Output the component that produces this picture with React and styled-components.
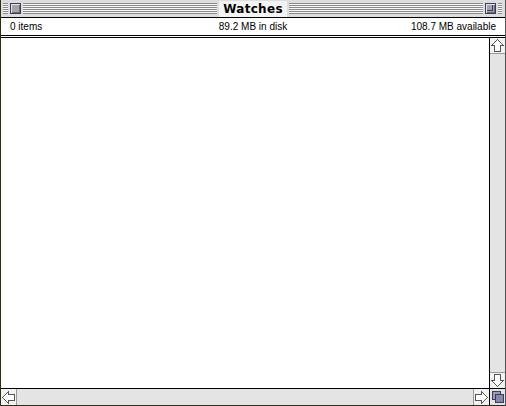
import React from "react";
import styled, { createGlobalStyle } from "styled-components";

const GlobalStyle = createGlobalStyle`
  html, body {
    margin: 0;
    padding: 0;
    background: #ffffff;
  }
  body {
    font-family: "DejaVu Sans", "Liberation Sans", sans-serif;
  }
`;

const Window = styled.div`
  width: 506px;
  height: 406px;
  box-sizing: border-box;
  display: grid;
  grid-template-rows: 18px 17px 3px 1fr 17px;
  border-left: 1px solid #2e2e18;
  border-right: 1px solid #555;
  border-bottom: 1px solid #2e2e18;
  background: #ffffff;
`;

const TitleBar = styled.div`
  display: flex;
  align-items: center;
  gap: 2px;
  padding: 0 3px 0 2px;
  background: #dddddd;
  border-bottom: 1px solid #000;
`;

const Stripes = styled.div`
  flex: ${p => (p.$w ? `0 0 ${p.$w}px` : "1")};
  height: 11px;
  background: repeating-linear-gradient(
    to bottom,
    #8a8a8a 0,
    #8a8a8a 1px,
    #f6f6f6 1px,
    #f6f6f6 2px
  );
`;

const BoxButton = styled.div`
  width: 9px;
  height: 9px;
  border: 1px solid #3a3a66;
  background: #a5a5a5;
  box-shadow: inset 1px 1px 0 #e6e6e6, inset -1px -1px 0 #6a6a6a;
  position: relative;
  flex: none;
`;

const ZoomInner = styled.div`
  position: absolute;
  left: 1px;
  top: 1px;
  width: 5px;
  height: 5px;
  border-right: 1px solid #3a3a66;
  border-bottom: 1px solid #3a3a66;
`;

const Title = styled.div`
  flex: none;
  padding: 0 4px;
  background: #f4f4f4;
  font-family: "DejaVu Sans", sans-serif;
  font-weight: bold;
  font-size: 12px;
  line-height: 16px;
  letter-spacing: 0.3px;
  color: #000;
`;

const Header = styled.div`
  display: grid;
  grid-template-columns: 1fr auto 1fr;
  align-items: center;
  padding: 0 9px 0 9px;
  font-family: "Liberation Sans", "DejaVu Sans", sans-serif;
  font-size: 10px;
  color: #000;
`;

const Cell = styled.span`
  justify-self: ${p => p.$align || "start"};
  white-space: nowrap;
`;

const Divider = styled.div`
  border-top: 1px solid #000;
  border-bottom: 1px solid #000;
`;

const Body = styled.div`
  display: grid;
  grid-template-columns: 1fr 16px;
  min-height: 0;
`;

const Content = styled.div`
  background: #ffffff;
`;

const VScroll = styled.div`
  display: grid;
  grid-template-rows: 16px 1fr 16px;
  border-left: 1px solid #000;
  background: #e4e4e4;
`;

const HRow = styled.div`
  display: grid;
  grid-template-columns: 1fr 16px;
  border-top: 1px solid #000;
`;

const HScroll = styled.div`
  display: grid;
  grid-template-columns: 16px 1fr 16px;
  background: #e4e4e4;
`;

const Arrow = styled.div`
  background: #f2f2f2;
  display: flex;
  align-items: center;
  justify-content: center;
  box-sizing: border-box;
  ${p => p.$side === "top" && "border-bottom: 1px solid #9a9a9a;"}
  ${p => p.$side === "bottom" && "border-top: 1px solid #9a9a9a;"}
  ${p => p.$side === "left" && "border-right: 1px solid #9a9a9a;"}
  ${p => p.$side === "right" && "border-left: 1px solid #9a9a9a;"}
`;

const Grow = styled.div`
  border-left: 1px solid #000;
  background: #e4e4e4;
  display: flex;
  align-items: center;
  justify-content: center;
`;

function ArrowIcon({ rotate }) {
  return (
    <svg width="13" height="13" viewBox="0 0 13 13" style={{ transform: `rotate(${rotate}deg)` }}>
      <path
        d="M6.5 0.5 L12.5 6.5 L9.5 6.5 L9.5 12.5 L3.5 12.5 L3.5 6.5 L0.5 6.5 Z"
        fill="#ffffff"
        stroke="#555"
        strokeWidth="1"
        shapeRendering="crispEdges"
      />
    </svg>
  );
}

function GrowIcon() {
  return (
    <svg width="12" height="12" viewBox="0 0 12 12" shapeRendering="crispEdges">
      <rect x="0.5" y="0.5" width="8" height="8" fill="#9a9ab4" stroke="#3a3a66" />
      <rect x="3.5" y="3.5" width="8" height="8" fill="#8888a8" stroke="#3a3a66" />
    </svg>
  );
}

export default function App() {
  return (
    <>
      <GlobalStyle />
      <Window>
        <TitleBar>
          <Stripes $w={5} />
          <BoxButton />
          <Stripes />
          <Title>Watches</Title>
          <Stripes />
          <BoxButton>
            <ZoomInner />
          </BoxButton>
          <Stripes $w={4} />
        </TitleBar>
        <Header>
          <Cell>0 items</Cell>
          <Cell $align="center">89.2 MB in disk</Cell>
          <Cell $align="end">108.7 MB available</Cell>
        </Header>
        <Divider />
        <Body>
          <Content />
          <VScroll>
            <Arrow $side="top">
              <ArrowIcon rotate={0} />
            </Arrow>
            <div />
            <Arrow $side="bottom">
              <ArrowIcon rotate={180} />
            </Arrow>
          </VScroll>
        </Body>
        <HRow>
          <HScroll>
            <Arrow $side="left">
              <ArrowIcon rotate={-90} />
            </Arrow>
            <div />
            <Arrow $side="right">
              <ArrowIcon rotate={90} />
            </Arrow>
          </HScroll>
          <Grow>
            <GrowIcon />
          </Grow>
        </HRow>
      </Window>
    </>
  );
}
